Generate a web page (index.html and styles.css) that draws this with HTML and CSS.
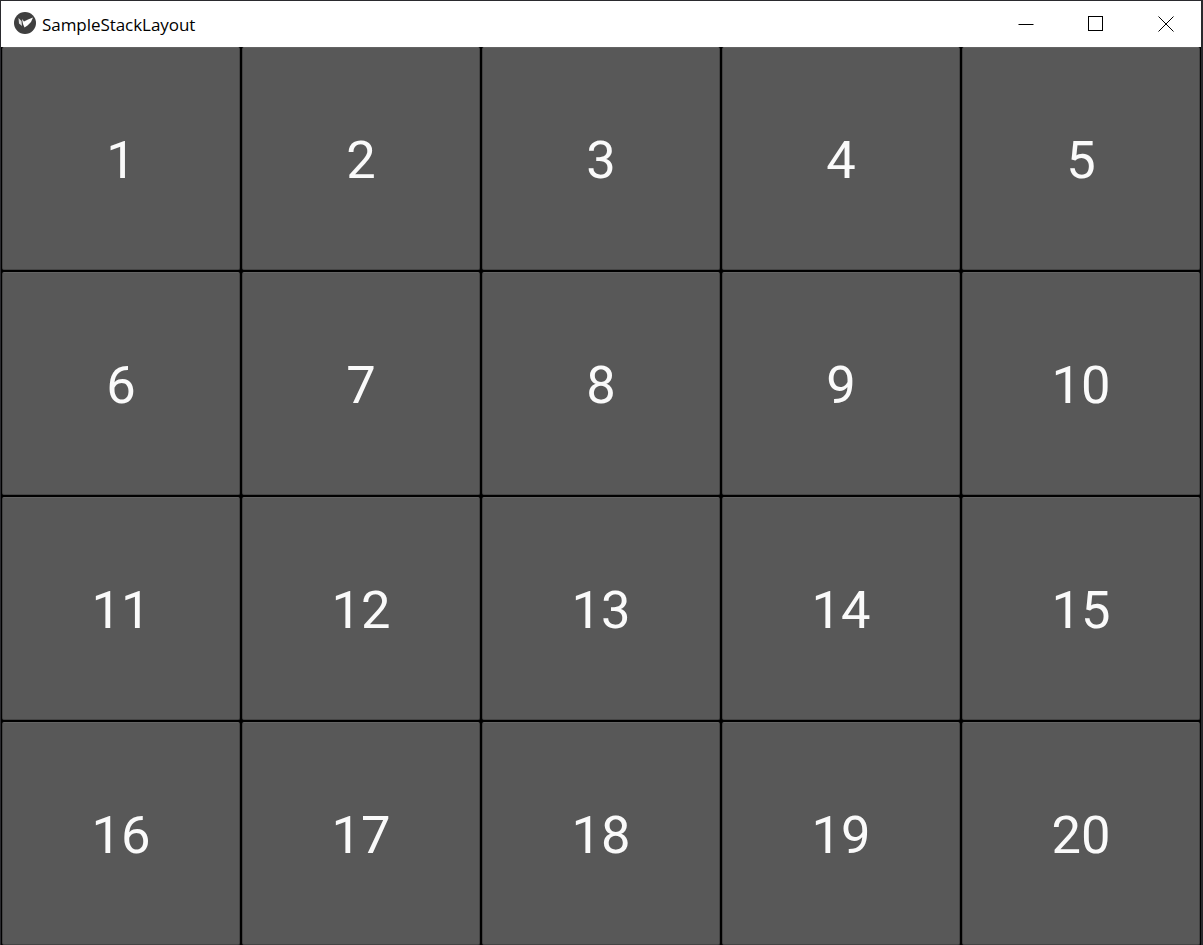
FILE: index.html
```html
<!DOCTYPE html>
<html lang="en">
<head>
    <meta charset="UTF-8">
    <title>SampleStackLayout</title>
    <link rel="stylesheet" href="styles.css">
</head>
<body>
    <div class="window">
        <div class="titlebar">
            <svg class="app-icon" width="22" height="22" viewBox="0 0 22 22">
                <circle cx="11" cy="11" r="11" fill="#3f3f3f"/>
                <path d="M4.5 6 L7.5 9 L8 14 L5 11.5 Z" fill="#fff" fill-opacity="0.85"/>
                <path d="M8 7 L10 9.5 L14 7.5 L19 5.5 L17 10 L13.5 13.5 L10.5 15.5 L9 12 Z" fill="#fff"/>
            </svg>
            <span class="title">SampleStackLayout</span>
            <div class="controls">
                <svg class="ctl" width="16" height="16" viewBox="0 0 16 16">
                    <path d="M0.5 8.5 H15.5" stroke="#000" fill="none"/>
                </svg>
                <svg class="ctl" width="16" height="16" viewBox="0 0 16 16">
                    <rect x="0.5" y="0.5" width="14" height="14" stroke="#000" fill="none"/>
                </svg>
                <svg class="ctl" width="16" height="16" viewBox="0 0 16 16">
                    <path d="M0.5 0.5 L15.5 15.5 M15.5 0.5 L0.5 15.5" stroke="#000" fill="none"/>
                </svg>
            </div>
        </div>
        <div class="grid">
            <div class="btn">1</div>
            <div class="btn">2</div>
            <div class="btn">3</div>
            <div class="btn">4</div>
            <div class="btn">5</div>
            <div class="btn">6</div>
            <div class="btn">7</div>
            <div class="btn">8</div>
            <div class="btn">9</div>
            <div class="btn">10</div>
            <div class="btn">11</div>
            <div class="btn">12</div>
            <div class="btn">13</div>
            <div class="btn">14</div>
            <div class="btn">15</div>
            <div class="btn">16</div>
            <div class="btn">17</div>
            <div class="btn">18</div>
            <div class="btn">19</div>
            <div class="btn">20</div>
        </div>
    </div>
</body>
</html>
```

FILE: styles.css
```css
html, body {
    margin: 0;
    padding: 0;
    background-color: #000;
}

.window {
    width: 1203px;
    height: 945px;
    display: flex;
    flex-direction: column;
    box-sizing: border-box;
    border: 1px solid #2a2a2e;
    border-right-width: 2px;
    border-bottom: none;
    overflow: hidden;
}

.titlebar {
    height: 46px;
    flex: none;
    background-color: #fff;
    display: flex;
    align-items: center;
    padding-left: 13px;
    font-family: "Open Sans", "Noto Sans", sans-serif;
    font-size: 17px;
    color: #000;
}

.app-icon {
    margin-right: 6px;
    margin-bottom: 2px;
}

.title {
    letter-spacing: -0.05px;
}

.controls {
    margin-left: auto;
    display: flex;
    gap: 54px;
    padding-right: 27px;
}

.grid {
    flex: 1;
    display: grid;
    grid-template-columns: repeat(5, 238px);
    grid-template-rows: repeat(4, 1fr);
    gap: 2px;
    padding: 0 1px;
    background-color: #000;
}

.btn {
    background-color: #585858;
    border: 1px solid #444;
    border-top-color: #646464;
    border-radius: 2px;
    box-sizing: border-box;
    display: flex;
    align-items: center;
    justify-content: center;
    padding-top: 3px;
    font-family: Roboto, sans-serif;
    font-size: 52.5px;
    color: #fafafa;
}
```
